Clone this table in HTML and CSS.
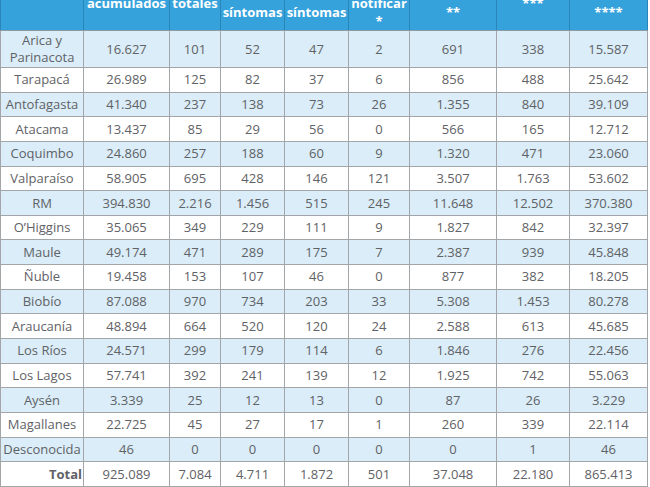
FILE: index.html
```html
<!DOCTYPE html>
<html lang="es">
<head>
<meta charset="utf-8">
<title>Casos por región</title>
<link rel="stylesheet" href="styles.css">
</head>
<body>
<table class="tabla">
  <colgroup>
    <col class="c1"><col class="c2"><col class="c3"><col class="c4"><col class="c5"><col class="c6"><col class="c7"><col class="c8"><col class="c9">
  </colgroup>
  <thead>
    <tr>
      <th class="h-region">Región</th>
      <th>Casos<br>acumulados</th>
      <th>Casos<br>totales</th>
      <th>Casos<br>con<br>síntomas</th>
      <th>Casos<br>sin<br>síntomas</th>
      <th>Casos<br>nuevos sin<br>notificar<br>*</th>
      <th>Fallecidos<br>totales<br>**</th>
      <th>Activos<br>***</th>
      <th>Recuperados<br>totales<br>****</th>
    </tr>
  </thead>
  <tbody>
    <tr class="alt dos"><td>Arica y<br>Parinacota</td><td>16.627</td><td>101</td><td>52</td><td>47</td><td>2</td><td>691</td><td>338</td><td>15.587</td></tr>
    <tr><td>Tarapacá</td><td>26.989</td><td>125</td><td>82</td><td>37</td><td>6</td><td>856</td><td>488</td><td>25.642</td></tr>
    <tr class="alt"><td>Antofagasta</td><td>41.340</td><td>237</td><td>138</td><td>73</td><td>26</td><td>1.355</td><td>840</td><td>39.109</td></tr>
    <tr><td>Atacama</td><td>13.437</td><td>85</td><td>29</td><td>56</td><td>0</td><td>566</td><td>165</td><td>12.712</td></tr>
    <tr class="alt"><td>Coquimbo</td><td>24.860</td><td>257</td><td>188</td><td>60</td><td>9</td><td>1.320</td><td>471</td><td>23.060</td></tr>
    <tr><td>Valparaíso</td><td>58.905</td><td>695</td><td>428</td><td>146</td><td>121</td><td>3.507</td><td>1.763</td><td>53.602</td></tr>
    <tr class="alt"><td>RM</td><td>394.830</td><td>2.216</td><td>1.456</td><td>515</td><td>245</td><td>11.648</td><td>12.502</td><td>370.380</td></tr>
    <tr><td>O’Higgins</td><td>35.065</td><td>349</td><td>229</td><td>111</td><td>9</td><td>1.827</td><td>842</td><td>32.397</td></tr>
    <tr class="alt"><td>Maule</td><td>49.174</td><td>471</td><td>289</td><td>175</td><td>7</td><td>2.387</td><td>939</td><td>45.848</td></tr>
    <tr><td>Ñuble</td><td>19.458</td><td>153</td><td>107</td><td>46</td><td>0</td><td>877</td><td>382</td><td>18.205</td></tr>
    <tr class="alt"><td>Biobío</td><td>87.088</td><td>970</td><td>734</td><td>203</td><td>33</td><td>5.308</td><td>1.453</td><td>80.278</td></tr>
    <tr><td>Araucanía</td><td>48.894</td><td>664</td><td>520</td><td>120</td><td>24</td><td>2.588</td><td>613</td><td>45.685</td></tr>
    <tr class="alt"><td>Los Ríos</td><td>24.571</td><td>299</td><td>179</td><td>114</td><td>6</td><td>1.846</td><td>276</td><td>22.456</td></tr>
    <tr><td>Los Lagos</td><td>57.741</td><td>392</td><td>241</td><td>139</td><td>12</td><td>1.925</td><td>742</td><td>55.063</td></tr>
    <tr class="alt"><td>Aysén</td><td>3.339</td><td>25</td><td>12</td><td>13</td><td>0</td><td>87</td><td>26</td><td>3.229</td></tr>
    <tr><td>Magallanes</td><td>22.725</td><td>45</td><td>27</td><td>17</td><td>1</td><td>260</td><td>339</td><td>22.114</td></tr>
    <tr class="alt"><td>Desconocida</td><td>46</td><td>0</td><td>0</td><td>0</td><td>0</td><td>0</td><td>1</td><td>46</td></tr>
    <tr class="total"><td>Total</td><td>925.089</td><td>7.084</td><td>4.711</td><td>1.872</td><td>501</td><td>37.048</td><td>22.180</td><td>865.413</td></tr>
  </tbody>
</table>
</body>
</html>
```

FILE: styles.css
```css
html, body {
  margin: 0;
  padding: 0;
  background: #ffffff;
}

.tabla {
  margin-top: -43px;
  width: 648px;
  table-layout: fixed;
  border-collapse: collapse;
  font-family: "Open Sans", "Liberation Sans", sans-serif;
  font-size: 13px;
  color: #5f6266;
}

.c1 { width: 83px; }
.c2 { width: 86px; }
.c3 { width: 51px; }
.c4 { width: 64px; }
.c5 { width: 64px; }
.c6 { width: 61px; }
.c7 { width: 87px; }
.c8 { width: 73px; }
.c9 { width: 78px; }

.tabla th {
  background: #36a2dc;
  color: #ffffff;
  font-weight: 700;
  font-size: 13px;
  line-height: 18px;
  height: 72px;
  padding: 0 1px;
  vertical-align: middle;
  text-align: center;
  border: 1px solid #2b86b8;
  border-bottom-color: #8a9aa6;
  white-space: nowrap;
}

.tabla th.h-region {
  vertical-align: top;
}

.tabla td {
  border: 1px solid #a3a6a9;
  text-align: center;
  vertical-align: middle;
  line-height: 17px;
  padding: 1px 0;
  white-space: nowrap;
}

.tabla tbody tr {
  height: 24.65px;
}

.tabla tbody tr.dos {
  height: 37px;
}

.tabla tr.alt td {
  background: #daedf8;
}

.tabla tr.total td:first-child {
  text-align: right;
  font-weight: 700;
  padding-right: 1px;
}
```
